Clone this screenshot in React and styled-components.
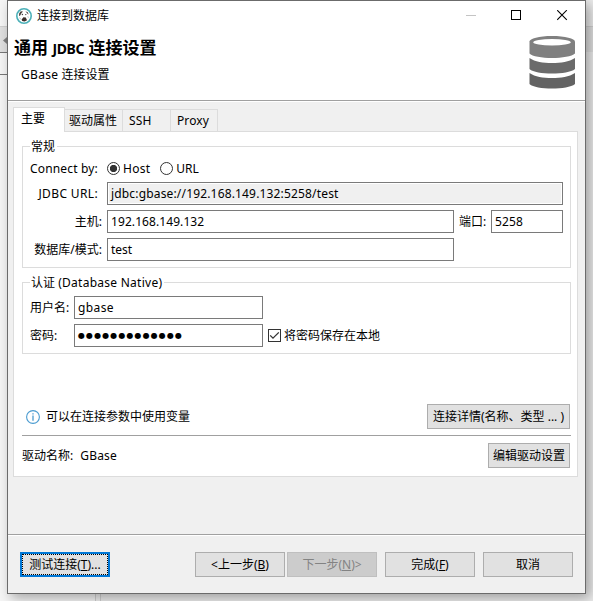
import React, { useState } from "react";
import styled, { createGlobalStyle } from "styled-components";

const tabs = [
  { label: "主要", width: 51, pad: 7 },
  { label: "驱动属性", width: 59, pad: 4 },
  { label: "SSH", width: 49, pad: 6, spacing: "0.2px" },
  { label: "Proxy", width: 48, pad: 6, spacing: "0.1px" },
];

function Logo() {
  return (
    <svg width="16" height="16" viewBox="0 0 16 16">
      <circle cx="8" cy="8" r="7.2" fill="#fff" stroke="#4bb0b8" strokeWidth="1.6" />
      <path d="M3.2 5.2L4.8 3.2L7 3.6L5.4 5.2L4.2 7.4L3 8Z" fill="#4a403c" />
      <path d="M9.4 3.2L11.8 4.2L12.6 6.6L11.2 5.6Z" fill="#5b5250" />
      <path d="M5.6 11.4L7.4 9.2L9.8 9.4L11 12.2L8.6 13.6L6.2 13Z" fill="#3b2e2a" />
      <circle cx="6.4" cy="6.5" r="0.7" fill="#444" />
      <circle cx="9.8" cy="6.6" r="0.7" fill="#444" />
      <path d="M3.6 9.6L4.8 11.4M11.8 8.4L12.4 9.6" stroke="#aaa" strokeWidth="0.8" />
    </svg>
  );
}

function DatabaseIcon() {
  return (
    <svg width="46" height="53" viewBox="0 0 46 53">
      <path
        d="M0.5 5.5C0.5 2.5 10 0 23 0S46 2.5 46 5.5V17.5C43 20.3 33 22 23 22S3 20.3 0.5 17.5Z"
        fill="#808080"
      />
      <ellipse cx="23" cy="6.2" rx="18.8" ry="3.2" fill="#fff" />
      <path d="M0.5 22C6 26 14 27 23 27S40 26 46 22V33C42 36.3 33 37.5 23 37.5S4 36.3 0.5 33Z" fill="#6b6b6b" />
      <path d="M0.5 37C6 41 14 42 23 42S40 41 46 37V48C42 51.3 33 52.5 23 52.5S4 51.3 0.5 48Z" fill="#636363" />
    </svg>
  );
}

function WindowButtons() {
  return (
    <Controls>
      <svg width="11" height="11" shapeRendering="crispEdges">
        <path d="M0 5.5H10" stroke="#c4c4c4" />
      </svg>
      <svg width="11" height="11" shapeRendering="crispEdges">
        <rect x="0.5" y="0.5" width="9" height="9" fill="none" stroke="#000" />
      </svg>
      <svg width="11" height="11">
        <path d="M0.2 0.2L9.8 9.8M9.8 0.2L0.2 9.8" stroke="#000" strokeWidth="1.1" />
      </svg>
    </Controls>
  );
}

function App() {
  const [active, setActive] = useState(0);
  const [mode, setMode] = useState("host");
  const [save, setSave] = useState(true);

  return (
    <Desktop>
      <GlobalStyle />
      <EdgeArrow width="4" height="7">
        <path d="M4 0L0 3.5L4 7Z" fill="#808080" />
      </EdgeArrow>
      <Dialog>
        <Header>
          <TitleBar>
            <Logo />
            <WindowTitle>连接到数据库</WindowTitle>
            <WindowButtons />
          </TitleBar>
          <Banner>
            <div>
              <Heading>
                通用 <HeadingLatin>JDBC</HeadingLatin> 连接设置
              </Heading>
              <SubHeading>
                <Latin $spacing="0.3px">GBase</Latin> 连接设置
              </SubHeading>
            </div>
            <DatabaseIcon />
          </Banner>
        </Header>

        <Body>
          <TabBar>
            {tabs.map((tab, index) => (
              <Tab
                key={tab.label}
                $active={index === active}
                $width={tab.width}
                $pad={tab.pad}
                $first={index === 0}
                $spacing={tab.spacing}
                onClick={() => setActive(index)}
              >
                {tab.label}
              </Tab>
            ))}
          </TabBar>
          <Panel>
            <Group $height={130}>
              <Legend>常规</Legend>
              <ModeRow>
                <Label $end={5} $spacing="0.17px">Connect by:</Label>
                <Option onClick={() => setMode("host")}>
                  <Radio $on={mode === "host"} />
                  <Latin $spacing="0.25px">Host</Latin>
                </Option>
                <Option onClick={() => setMode("url")}>
                  <Radio $on={mode === "url"} />
                  URL
                </Option>
              </ModeRow>
              <Row>
                <Label $end={5} $spacing="0.36px">JDBC URL:</Label>
                <Field $width={456} $readOnly $spacing="0.165px">
                  jdbc:gbase://192.168.149.132:5258/test
                </Field>
              </Row>
              <Row>
                <Label $end={1}>主机:</Label>
                <Field $width={347} $spacing="0.08px">192.168.149.132</Field>
                <PortLabel>端口:</PortLabel>
                <Field $width={72} $spacing="0.1px">5258</Field>
              </Row>
              <Row>
                <Label $end={1}>数据库/模式:</Label>
                <Field $width={347}>test</Field>
              </Row>
            </Group>

            <Group $height={80} $top={6} $pad={5}>
              <Legend>
                认证 <Latin $spacing="0.27px">(Database Native)</Latin>
              </Legend>
              <Row>
                <AuthLabel>用户名:</AuthLabel>
                <Field $width={189} $spacing="0.4px">gbase</Field>
              </Row>
              <Row>
                <AuthLabel>密码:</AuthLabel>
                <Field $width={189}>
                  <Dots>{"●".repeat(13)}</Dots>
                </Field>
                <Check onClick={() => setSave(!save)}>
                  <CheckBox>
                    {save && (
                      <svg width="11" height="11">
                        <path d="M1.2 5.4L4 8.2L9.8 2.4" fill="none" stroke="#333" strokeWidth="1.3" />
                      </svg>
                    )}
                  </CheckBox>
                  将密码保存在本地
                </Check>
              </Row>
            </Group>

            <InfoRow>
              <svg width="14" height="14">
                <circle cx="7" cy="7" r="6.4" fill="#fff" stroke="#4a9bd0" strokeWidth="1.1" />
                <path d="M7 3.2V4.6M7 5.6V10.8" stroke="#4a9bd0" strokeWidth="1.3" />
              </svg>
              <InfoText>可以在连接参数中使用变量</InfoText>
              <Button $width={143}>连接详情(名称、类型 ... )</Button>
            </InfoRow>
            <Separator />
            <DriverRow>
              <span>驱动名称:</span>
              <DriverName>GBase</DriverName>
              <Button $width={82}>编辑驱动设置</Button>
            </DriverRow>
          </Panel>
        </Body>

        <Footer>
          <DefaultButton $width={90}>
            测试连接(<u>T</u>)...
          </DefaultButton>
          <Spacer />
          <Button $width={90}>
            &lt;上一步(<u>B</u>)
          </Button>
          <Button $width={90} $gap={2} disabled>
            下一步(<u>N</u>)&gt;
          </Button>
          <Button $width={90} $gap={8}>
            完成(<u>F</u>)
          </Button>
          <Button $width={90} $gap={8}>
            取消
          </Button>
        </Footer>
      </Dialog>
    </Desktop>
  );
}

export default App;

const GlobalStyle = createGlobalStyle`
  * {
    box-sizing: border-box;
  }
  body {
    margin: 0;
    overflow: hidden;
    color: #000;
    font: 12px/16px "Noto Sans", "Noto Sans CJK SC", sans-serif;
  }
  svg {
    display: block;
    flex: none;
  }
`;

const Desktop = styled.div`
  width: 593px;
  height: 601px;
  display: flex;
  overflow: hidden;
  background: linear-gradient(#777, #777) 0 52px / 7px 1px no-repeat,
    linear-gradient(#777, #777) 0 74px / 7px 1px no-repeat,
    linear-gradient(#d0d0d0, #d0d0d0) 0 26px / 100% 1px no-repeat,
    linear-gradient(#e0e0e0, #e0e0e0) 0 27px / 100% 25px no-repeat,
    linear-gradient(90deg, #d0d0d0 1px, #f0f0f0 1px 5px, #d0d0d0 5px) 95px 594px / 6px 7px no-repeat,
    linear-gradient(90deg, #f5f5f5 100px, #ececec 100px);
`;

const EdgeArrow = styled.svg`
  margin: 37px 0 0 3px;
`;

const Dialog = styled.div`
  width: 579px;
  height: 594px;
  flex: none;
  display: flex;
  flex-direction: column;
  border: 1px solid #6b6b6b;
  background: #f0f0f0;
  box-shadow: 4px 4px 12px rgba(0, 0, 0, 0.33);
`;

const Header = styled.div`
  height: 101px;
  background: #fff;
  border-bottom: 1px solid #fff;
  box-shadow: inset 0 -1px 0 #a0a0a0;
`;

const TitleBar = styled.div`
  height: 29px;
  display: flex;
  align-items: center;
  padding: 0 17px 0 8px;
`;

const WindowTitle = styled.span`
  margin-left: 5px;
  flex: 1;
`;

const Controls = styled.div`
  display: flex;
  gap: 34px;
  svg:last-child {
    margin-left: 1px;
  }
`;

const Banner = styled.div`
  display: flex;
  justify-content: space-between;
  padding: 6px 10px 0 6px;
`;

const Heading = styled.div`
  height: 24px;
  font-size: 17px;
  line-height: 24px;
  font-weight: 700;
  white-space: nowrap;
`;

const HeadingLatin = styled.span`
  font-size: 14px;
  letter-spacing: -0.4px;
`;

const SubHeading = styled.div`
  padding: 7px 0 0 7px;
`;

const Latin = styled.span`
  letter-spacing: ${(props) => props.$spacing};
`;

const Body = styled.div`
  flex: 1;
  padding: 5px 7px 0 5px;
`;

const TabBar = styled.div`
  height: 25px;
  display: flex;
  align-items: flex-end;
`;

const Tab = styled.div`
  width: ${(props) => props.$width}px;
  height: ${(props) => (props.$active ? 25 : 23)}px;
  margin-left: ${(props) => (props.$first ? 0 : -1)}px;
  padding: 3px 0 0 ${(props) => props.$pad}px;
  border: 1px solid #dcdcdc;
  border-bottom-width: ${(props) => (props.$active ? 0 : 1)}px;
  background: ${(props) => (props.$active ? "#fff" : "#f0f0f0")};
  letter-spacing: ${(props) => props.$spacing || "0"};
  white-space: nowrap;
  &:first-child {
    width: 52px;
  }
`;

const Panel = styled.div`
  height: 346px;
  margin-top: -1px;
  padding: 6px 6px 0 8px;
  border: 1px solid #dcdcdc;
  background: #fff;
  clip-path: polygon(0 1px, 51px 1px, 51px 0, 100% 0, 100% 100%, 0 100%);
`;

const Group = styled.fieldset`
  height: ${(props) => props.$height}px;
  min-width: 0;
  margin: ${(props) => props.$top || 0}px 0 0;
  padding: ${(props) => props.$pad || 0}px 7px 0;
  border: 1px solid #dcdcdc;
`;

const Legend = styled.legend`
  height: 17px;
  padding: 1px 2px 0 1px;
`;

const Row = styled.div`
  height: 23px;
  display: flex;
  align-items: center;
  margin-bottom: 5px;
`;

const ModeRow = styled(Row)`
  height: 22px;
  padding-top: 5px;
`;

const Label = styled.div`
  width: 77px;
  padding-right: ${(props) => props.$end + 4}px;
  display: flex;
  justify-content: flex-end;
  letter-spacing: ${(props) => props.$spacing || "0"};
  white-space: nowrap;
`;

const PortLabel = styled.div`
  width: 37px;
  padding-left: 5px;
`;

const AuthLabel = styled.div`
  width: 44px;
`;

const Field = styled.div`
  width: ${(props) => props.$width}px;
  height: 23px;
  padding: 2px 3px;
  border: 1px solid #7a7a7a;
  background: ${(props) => (props.$readOnly ? "#f0f0f0" : "#fff")};
  box-shadow: inset 0 0 0 1px #fff;
  letter-spacing: ${(props) => props.$spacing || "0"};
  line-height: 17px;
  white-space: nowrap;
`;

const Dots = styled.span`
  display: block;
  font: 8px/17px "DejaVu Sans", sans-serif;
  letter-spacing: 1.1px;
`;

const Option = styled.div`
  display: flex;
  align-items: center;
  gap: 3px;
  margin-right: 10px;
`;

const Radio = styled.span`
  width: 13px;
  height: 13px;
  border: 1px solid #333;
  border-radius: 50%;
  background: ${(props) =>
    props.$on ? "radial-gradient(circle, #333 3.3px, #fff 4px)" : "#fff"};
`;

const Check = styled.div`
  display: flex;
  align-items: center;
  gap: 3px;
  margin-left: 5px;
`;

const CheckBox = styled.span`
  width: 13px;
  height: 13px;
  border: 1px solid #333;
`;

const InfoRow = styled.div`
  height: 25px;
  display: flex;
  align-items: center;
  margin-top: 50px;
  padding: 0 1px 0 4px;
`;

const InfoText = styled.span`
  flex: 1;
  padding-left: 6px;
`;

const Separator = styled.div`
  height: 1px;
  margin: 6px 0 7px;
  background: #a0a0a0;
`;

const DriverRow = styled.div`
  height: 25px;
  display: flex;
  align-items: center;
  padding-right: 1px;
`;

const DriverName = styled.span`
  flex: 1;
  padding-left: 7px;
  letter-spacing: 0.2px;
`;

const Button = styled.button`
  width: ${(props) => props.$width}px;
  height: 25px;
  flex: none;
  margin: 0 0 0 ${(props) => props.$gap || 0}px;
  padding: 0;
  border: 1px solid #adadad;
  background: #e1e1e1;
  color: #000;
  font: inherit;
  white-space: nowrap;
  &:disabled {
    border-color: #bfbfbf;
    background: #ccc;
    color: #838383;
  }
`;

const DefaultButton = styled(Button)`
  border: 2px solid #0078d7;
  outline: 1px dotted #000;
  outline-offset: -3px;
`;

const Footer = styled.div`
  height: 59px;
  display: flex;
  padding: 17px 12px 0;
  border-top: 1px solid #a0a0a0;
  box-shadow: inset 0 1px 0 #fff;
`;

const Spacer = styled.div`
  flex: 1;
`;
